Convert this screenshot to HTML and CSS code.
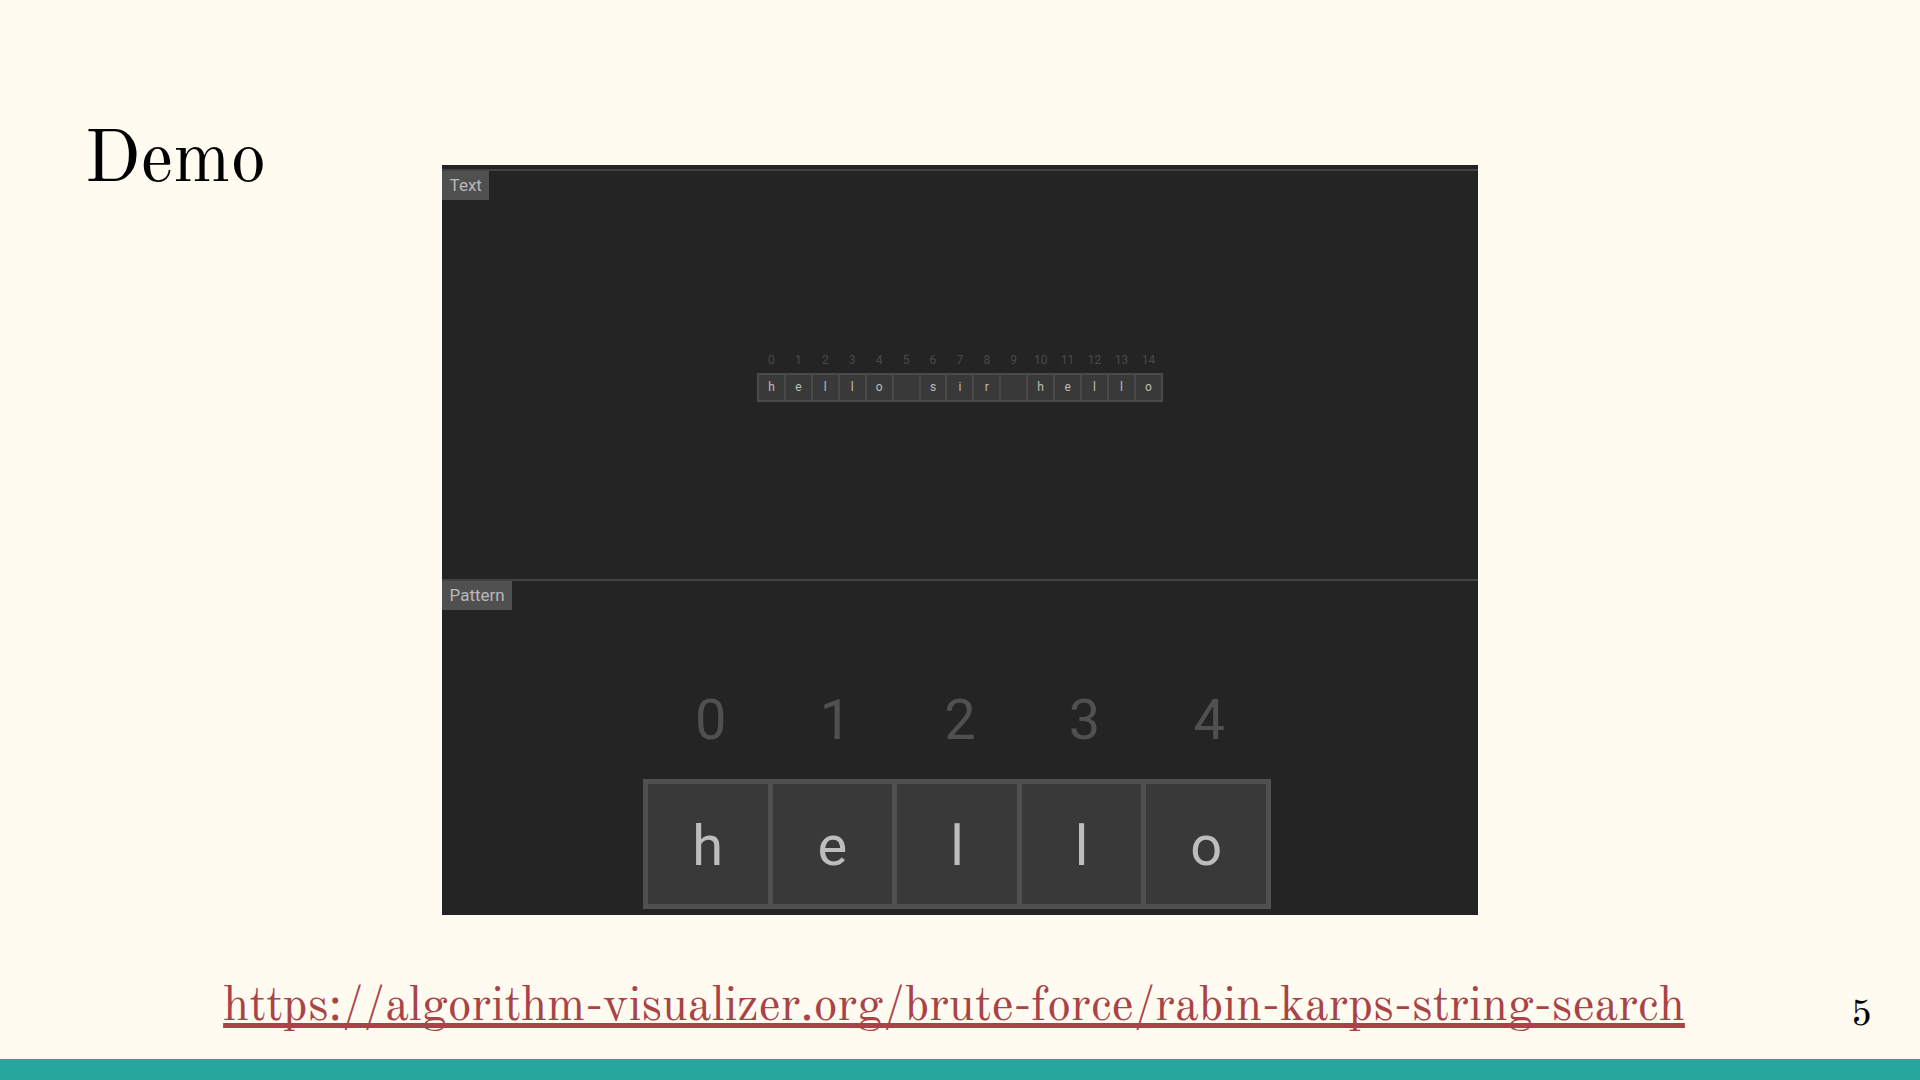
FILE: index.html
```html
<!DOCTYPE html>
<html lang="en">
<head>
	<meta charset="UTF-8">
	<meta name="viewport" content="width=device-width, initial-scale=1.0">
	<title>Demo</title>
	<link rel="stylesheet" href="styles.css">
</head>
<body>
	<main class="slide">
		<h1 class="title">Demo</h1>

		<div class="viewer">
			<section class="panel panel-text">
				<h2 class="tab">Text</h2>
				<table class="array">
					<thead>
						<tr><th>0</th><th>1</th><th>2</th><th>3</th><th>4</th><th>5</th><th>6</th><th>7</th><th>8</th><th>9</th><th>10</th><th>11</th><th>12</th><th>13</th><th>14</th></tr>
					</thead>
					<tbody>
						<tr><td>h</td><td>e</td><td>l</td><td>l</td><td>o</td><td></td><td>s</td><td>i</td><td>r</td><td></td><td>h</td><td>e</td><td>l</td><td>l</td><td>o</td></tr>
					</tbody>
				</table>
			</section>

			<section class="panel panel-pattern">
				<h2 class="tab">Pattern</h2>
				<table class="array array-large">
					<thead>
						<tr><th>0</th><th>1</th><th>2</th><th>3</th><th>4</th></tr>
					</thead>
					<tbody>
						<tr><td>h</td><td>e</td><td>l</td><td>l</td><td>o</td></tr>
					</tbody>
				</table>
			</section>
		</div>
	</main>

	<footer class="footer">
		<a class="link" href="https://algorithm-visualizer.org/brute-force/rabin-karps-string-search">https://algorithm-visualizer.org/brute-force/rabin-karps-string-search</a>
		<span class="page">5</span>
	</footer>
</body>
</html>
```

FILE: styles.css
```css
* { box-sizing: border-box; }

body
{
	margin: 0;
	min-height: 100vh;
	display: flex;
	flex-direction: column;
	background-color: #fffbf0;
	color: #000;
	font-family: "Old Standard TT", "Liberation Serif", serif;
}

.slide
{
	flex: 1;
	display: grid;
	grid-template-columns: 1fr 54% 1fr;
	align-items: start;
	padding-top: 122px;
}

.title
{
	margin: 0;
	padding-left: 84px;
	font-size: 72px;
	line-height: 80px;
	font-weight: normal;
}

/* visualizer */
.viewer
{
	margin-top: 43px;
	padding-top: 4px;
	background-color: #242424;
	font-family: Roboto, sans-serif;
}

.panel
{
	display: grid;
	border-top: 2px solid #424242;
}

.panel-text
{
	height: 410px;
	padding-bottom: 2px;
}

.panel-pattern
{
	height: 336px;
	padding: 0 6px 6px 0;
}

.tab, .array { grid-area: 1 / 1; }

.tab
{
	align-self: start;
	justify-self: start;
	margin: 0;
	padding: 0 7px 1px 8px;
	background-color: #505050;
	color: #b8b8b8;
	font-size: 17px;
	line-height: 28px;
	font-weight: normal;
}

.array
{
	place-self: center;
	border-collapse: collapse;
	table-layout: fixed;
	width: 406px;
	color: #bdbdbd;
	font-size: 12px;
	line-height: 16px;
	text-align: center;
}

.array th, .array td
{
	height: 27px;
	padding: 0;
}

.array th
{
	color: #4a4a4a;
	font-weight: normal;
}

.array td
{
	background-color: #393939;
	border: 2px solid #4a4a4a;
}

.array-large
{
	align-self: end;
	width: 628px;
	font-size: 56px;
	line-height: 64px;
}

.array-large th, .array-large td
{
	height: 125px;
	padding-top: 4px;
}

.array-large th
{
	padding-left: 6px;
	color: #505050;
}

.array-large td { border: 5px solid #505050; }

/* bottom row */
.footer
{
	display: grid;
	grid-template-columns: 1fr auto 1fr;
	align-items: end;
	padding-right: 12px;
	padding-bottom: 24px;
	border-bottom: 21px solid #26a69a;
}

.link
{
	grid-column: 2;
	color: #a94347;
	font-size: 48px;
	line-height: 56px;
	text-decoration: underline;
	text-decoration-thickness: 5px;
	text-decoration-skip-ink: none;
	text-underline-offset: 3px;
}

.page
{
	justify-self: end;
	padding-right: 36px;
	font-size: 36px;
	line-height: 38px;
}
```
